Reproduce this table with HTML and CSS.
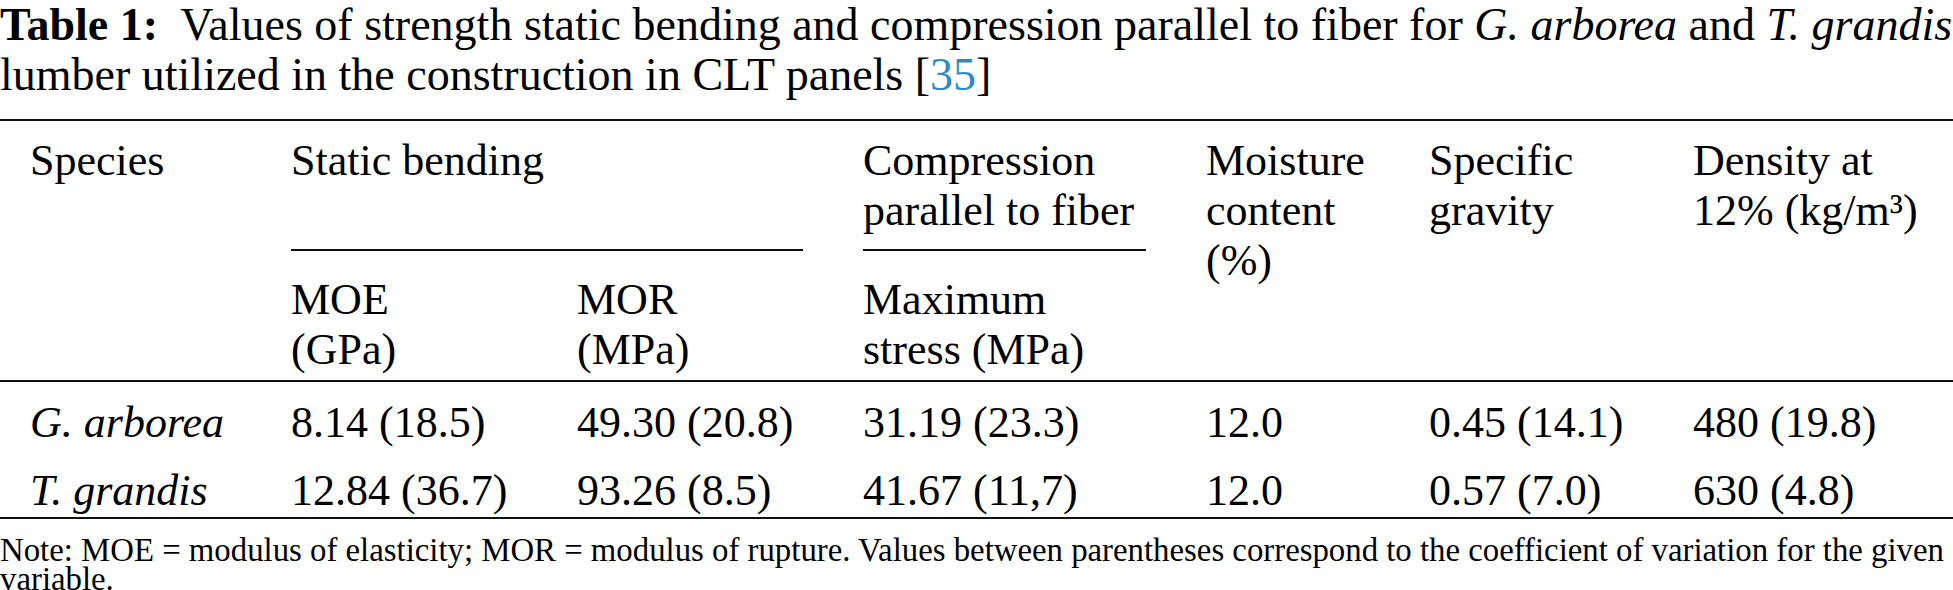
FILE: index.html
```html
<!DOCTYPE html>
<html lang="en">
<head>
<meta charset="utf-8">
<title>Table 1</title>
<link rel="stylesheet" href="styles.css">
</head>
<body>
<div class="doc">
  <p class="caption"><b class="label">Table 1:</b>&nbsp; Values of strength static bending and compression parallel to fiber for <i>G. arborea</i> and <i>T. grandis</i> lumber utilized in the construction in CLT panels [<a class="ref" href="#b35">35</a>]</p>
  <table class="data">
    <colgroup>
      <col class="c1"><col class="c2"><col class="c3"><col class="c4"><col class="c5"><col class="c6"><col class="c7">
    </colgroup>
    <thead>
      <tr class="h1">
        <th rowspan="2">Species</th>
        <th colspan="2"><div class="grp">Static bending</div></th>
        <th><div class="grp">Compression parallel to fiber</div></th>
        <th rowspan="2">Moisture content (%)</th>
        <th rowspan="2">Specific gravity</th>
        <th rowspan="2">Density at 12% (kg/m³)</th>
      </tr>
      <tr class="h2">
        <th>MOE<br>(GPa)</th>
        <th>MOR<br>(MPa)</th>
        <th>Maximum stress (MPa)</th>
      </tr>
    </thead>
    <tbody>
      <tr class="r1">
        <td><i>G. arborea</i></td>
        <td>8.14 (18.5)</td>
        <td>49.30 (20.8)</td>
        <td>31.19 (23.3)</td>
        <td>12.0</td>
        <td>0.45 (14.1)</td>
        <td>480 (19.8)</td>
      </tr>
      <tr class="r2">
        <td><i>T. grandis</i></td>
        <td>12.84 (36.7)</td>
        <td>93.26 (8.5)</td>
        <td>41.67 (11,7)</td>
        <td>12.0</td>
        <td>0.57 (7.0)</td>
        <td>630 (4.8)</td>
      </tr>
    </tbody>
  </table>
  <p class="note">Note: MOE = modulus of elasticity; MOR = modulus of rupture. Values between parentheses correspond to the coefficient of variation for the given variable.</p>
</div>
</body>
</html>
```
FILE: styles.css
```css
html, body {
  margin: 0;
  padding: 0;
  background: #fff;
}
body {
  font-family: "Liberation Serif", "Times New Roman", serif;
  color: #000;
  overflow: hidden;
}
.doc {
  width: 1953px;
}
.caption {
  margin: 0;
  font-size: 46px;
  line-height: 50px;
}
.label {
  font-weight: bold;
}
.ref {
  color: #2a8bc6;
  text-decoration: none;
}
.data {
  margin-top: 19px;
  width: 1953px;
  border-collapse: collapse;
  table-layout: fixed;
  font-size: 44px;
  line-height: 50px;
  border-top: 2px solid #111;
  border-bottom: 2px solid #111;
}
.c1 { width: 261px; }
.c2 { width: 286px; }
.c3 { width: 286px; }
.c4 { width: 343px; }
.c5 { width: 223px; }
.c6 { width: 264px; }
.c7 { width: 290px; }
.data th {
  font-weight: normal;
  text-align: left;
  vertical-align: top;
  padding: 0 30px;
}
.data thead {
  border-bottom: 2px solid #111;
}
.h1 th {
  padding-top: 15px;
}
.grp {
  height: 100px;
  padding-bottom: 13px;
  border-bottom: 2px solid #111;
}
.h2 th {
  padding-top: 24px;
  padding-bottom: 5px;
}
.data td {
  padding: 0 30px;
  vertical-align: top;
  white-space: nowrap;
}
.r1 td {
  padding-top: 16px;
}
.r2 td {
  padding-top: 18px;
  padding-bottom: 1px;
}
.note {
  margin: 17px 0 0 0;
  font-size: 32.8px;
  line-height: 29px;
}
```
